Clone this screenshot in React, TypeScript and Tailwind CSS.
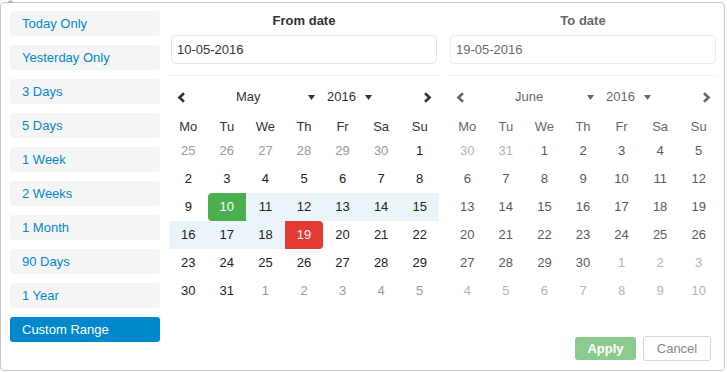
import React from 'react';

const RANGES = ['Today Only', 'Yesterday Only', '3 Days', '5 Days', '1 Week', '2 Weeks', '1 Month', '90 Days', '1 Year'];
const DOW = ['Mo', 'Tu', 'We', 'Th', 'Fr', 'Sa', 'Su'];

type Day = { n: number; off?: boolean; kind?: 'start' | 'end' | 'in' };

const may: Day[] = [
  ...[25, 26, 27, 28, 29, 30].map(n => ({ n, off: true })),
  ...Array.from({ length: 31 }, (_, i) => {
    const n = i + 1;
    const kind: Day['kind'] = n === 10 ? 'start' : n === 19 ? 'end' : n > 10 && n < 19 ? 'in' : undefined;
    return { n, kind };
  }),
  ...[1, 2, 3, 4, 5].map(n => ({ n, off: true })),
];

const june: Day[] = [
  ...[30, 31].map(n => ({ n, off: true })),
  ...Array.from({ length: 30 }, (_, i) => ({ n: i + 1 })),
  ...[1, 2, 3, 4, 5, 6, 7, 8, 9, 10].map(n => ({ n, off: true })),
];

const Chevron = ({ dir }: { dir: 'left' | 'right' }) => (
  <svg width="9" height="11" viewBox="0 0 9 11">
    <path
      d={dir === 'left' ? 'M7 1.2 L2.4 5.5 L7 9.8' : 'M2 1.2 L6.6 5.5 L2 9.8'}
      fill="none"
      stroke="#333"
      strokeWidth="2.6"
    />
  </svg>
);

const Caret = () => (
  <svg width="7" height="5" viewBox="0 0 7 5">
    <path d="M0 0 L7 0 L3.5 5 Z" fill="#333" />
  </svg>
);

const dayClass = (d: Day) => {
  if (d.kind === 'start') return 'bg-[#4caf50] text-white rounded-l-[4px]';
  if (d.kind === 'end') return 'bg-[#e53935] text-white rounded-r-[4px]';
  if (d.kind === 'in') return 'bg-[#ebf4f8] text-[#222]';
  if (d.off) return 'text-[#999]';
  return 'text-[#222]';
};

const Calendar = ({ title, value, month, days, faded }: {
  title: string; value: string; month: string; days: Day[]; faded?: boolean;
}) => (
  <div className={`w-[270px] ${faded ? 'opacity-75' : ''}`}>
    <div className="h-[32px] pt-[4px] flex items-center justify-center font-bold text-[#333]">{title}</div>
    <div className="mx-[2px] h-[29px] border border-[#e6e6e6] rounded-[4px] flex items-center pl-[5px] text-[#333]">
      {value}
    </div>
    <div className="mt-[11px] border-t border-[#eeeeee]" />
    <div className="h-[42px] flex items-center text-[#333]">
      <div className="w-[24px] flex justify-center"><Chevron dir="left" /></div>
      <div className="ml-[43px] w-[79px] flex items-center justify-between">
        <span>{month}</span>
        <Caret />
      </div>
      <div className="ml-[12px] w-[45px] flex items-center justify-between">
        <span>2016</span>
        <Caret />
      </div>
      <div className="flex-1" />
      <div className="w-[24px] flex justify-center"><Chevron dir="right" /></div>
    </div>
    <div className="grid grid-cols-7 h-[19px] items-start text-center text-[#333] leading-[18px]">
      {DOW.map(d => <div key={d}>{d}</div>)}
    </div>
    <div className="grid grid-cols-7 text-center">
      {days.map((d, i) => (
        <div key={i} className={`h-[28px] leading-[28px] ${dayClass(d)}`}>{d.n}</div>
      ))}
    </div>
  </div>
);

export default function App() {
  return (
    <div
      className="w-[727px] h-[372px] bg-white overflow-hidden relative text-[13px]"
      style={{ fontFamily: '"Liberation Sans", Arial, sans-serif' }}
    >
      <div className="absolute top-0 left-[6px]">
        <svg width="9" height="3" viewBox="0 0 9 3"><path d="M0 3 L4.5 0 L9 3 Z" fill="#bbb" /></svg>
      </div>
      <div className="mt-[2px] w-[725px] h-[369px] border border-[#c8c8c8] rounded-[4px] flex">
        <div className="pl-[9px] pt-[8px] flex flex-col gap-[9px]">
          {RANGES.map(r => (
            <div key={r} className="w-[150px] h-[25px] bg-[#f5f5f5] rounded-[4px] flex items-center pl-[12px] text-[#08c]">
              {r}
            </div>
          ))}
          <div className="w-[150px] h-[25px] bg-[#08c] rounded-[3px] flex items-center pl-[12px] text-white">
            Custom Range
          </div>
        </div>
        <div className="ml-[9px] flex flex-col">
          <div className="flex gap-[9px]">
            <Calendar title="From date" value="10-05-2016" month="May" days={may} />
            <Calendar title="To date" value="19-05-2016" month="June" days={june} faded />
          </div>
          <div className="mt-[31px] flex justify-end gap-[7px] pr-[7px]">
            <div className="w-[61px] h-[23px] mt-[1px] bg-[#8bcb8d] rounded-[3px] flex items-center justify-center text-white font-bold">
              Apply
            </div>
            <div className="w-[68px] h-[25px] border border-[#d5d5d5] rounded-[3px] flex items-center justify-center text-[#888]">
              Cancel
            </div>
          </div>
        </div>
      </div>
    </div>
  );
}
